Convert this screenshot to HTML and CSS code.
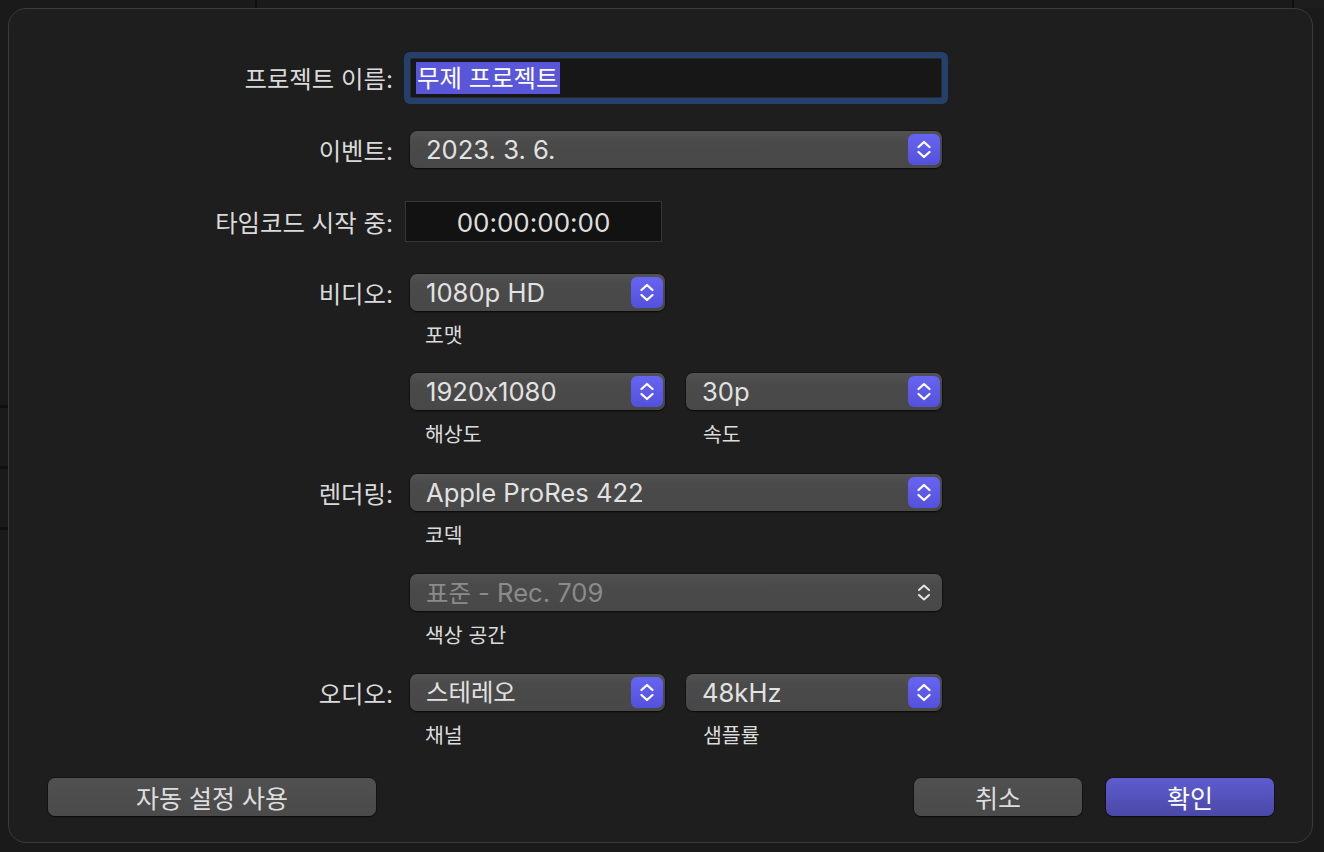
FILE: index.html
```html
<!DOCTYPE html>
<html lang="ko">
<head>
<meta charset="utf-8">
<title>새 프로젝트</title>
<link rel="stylesheet" href="styles.css">
</head>
<body>
<div class="screen">
  <div class="dialog">
    <div class="form">
      <div class="row r-name">
        <div class="label field-label">프로젝트 이름:</div>
        <div class="ctl">
          <div class="textfield"><span class="sel">무제 프로젝트</span></div>
        </div>
      </div>

      <div class="row r-event">
        <div class="label">이벤트:</div>
        <div class="ctl">
          <div class="popup"><span class="val">2023. 3. 6.</span>
            <span class="stepper"><svg viewBox="0 0 32 31" width="32" height="31"><polyline points="10.5,13 16,8 21.5,13"/><polyline points="10.5,18 16,23 21.5,18"/></svg></span>
          </div>
        </div>
      </div>

      <div class="row r-tc">
        <div class="label tc-label">타임코드 시작 중:</div>
        <div class="ctl">
          <div class="timecode">00:00:00:00</div>
        </div>
      </div>

      <div class="row r-video">
        <div class="label">비디오:</div>
        <div class="ctl pair">
          <div class="cell">
            <div class="popup"><span class="val">1080p HD</span>
              <span class="stepper"><svg viewBox="0 0 32 31" width="32" height="31"><polyline points="10.5,13 16,8 21.5,13"/><polyline points="10.5,18 16,23 21.5,18"/></svg></span>
            </div>
            <div class="sub">포맷</div>
          </div>
          <div class="cell"></div>
        </div>
      </div>

      <div class="row r-res">
        <div class="label"></div>
        <div class="ctl pair">
          <div class="cell">
            <div class="popup"><span class="val">1920x1080</span>
              <span class="stepper"><svg viewBox="0 0 32 31" width="32" height="31"><polyline points="10.5,13 16,8 21.5,13"/><polyline points="10.5,18 16,23 21.5,18"/></svg></span>
            </div>
            <div class="sub">해상도</div>
          </div>
          <div class="cell">
            <div class="popup"><span class="val">30p</span>
              <span class="stepper"><svg viewBox="0 0 32 31" width="32" height="31"><polyline points="10.5,13 16,8 21.5,13"/><polyline points="10.5,18 16,23 21.5,18"/></svg></span>
            </div>
            <div class="sub">속도</div>
          </div>
        </div>
      </div>

      <div class="row r-render">
        <div class="label">렌더링:</div>
        <div class="ctl">
          <div class="popup"><span class="val">Apple ProRes 422</span>
            <span class="stepper"><svg viewBox="0 0 32 31" width="32" height="31"><polyline points="10.5,13 16,8 21.5,13"/><polyline points="10.5,18 16,23 21.5,18"/></svg></span>
          </div>
          <div class="sub">코덱</div>
        </div>
      </div>

      <div class="row r-color">
        <div class="label"></div>
        <div class="ctl">
          <div class="popup disabled"><span class="val"><span class="ko">표준</span> - Rec. 709</span>
            <span class="stepper plain"><svg viewBox="0 0 32 31" width="32" height="31"><polyline points="11,13 16,8.5 21,13"/><polyline points="11,18 16,22.5 21,18"/></svg></span>
          </div>
          <div class="sub">색상 공간</div>
        </div>
      </div>

      <div class="row r-audio">
        <div class="label">오디오:</div>
        <div class="ctl pair">
          <div class="cell">
            <div class="popup"><span class="val ko">스테레오</span>
              <span class="stepper"><svg viewBox="0 0 32 31" width="32" height="31"><polyline points="10.5,13 16,8 21.5,13"/><polyline points="10.5,18 16,23 21.5,18"/></svg></span>
            </div>
            <div class="sub">채널</div>
          </div>
          <div class="cell">
            <div class="popup"><span class="val">48kHz</span>
              <span class="stepper"><svg viewBox="0 0 32 31" width="32" height="31"><polyline points="10.5,13 16,8 21.5,13"/><polyline points="10.5,18 16,23 21.5,18"/></svg></span>
            </div>
            <div class="sub">샘플률</div>
          </div>
        </div>
      </div>
    </div>

    <div class="buttons">
      <button class="btn btn-auto">자동 설정 사용</button>
      <div class="spacer"></div>
      <button class="btn btn-cancel">취소</button>
      <button class="btn btn-ok">확인</button>
    </div>
  </div>
</div>
</body>
</html>
```

FILE: styles.css
```css
html, body {
  margin: 0;
  padding: 0;
}

body {
  background: #1a1a1a;
  font-family: "Inter", "Noto Sans CJK KR", sans-serif;
  font-feature-settings: "calt" 0;
  color: #dadada;
}

.screen {
  width: 1324px;
  height: 852px;
  box-sizing: border-box;
  padding: 8px 11px 9px 8px;
  background-color: #1a1a1a;
  background-image:
    linear-gradient(to right, transparent 255px, #0e0e0e 255px, #0e0e0e 257px, transparent 257px),
    linear-gradient(to right, transparent 1292px, #0e0e0e 1292px, #0e0e0e 1294px, #1d1d1d 1294px),
    linear-gradient(to bottom, transparent 405px, #0f0f0f 405px, #0f0f0f 408px, transparent 408px),
    linear-gradient(to bottom, transparent 466px, #0f0f0f 466px, #0f0f0f 469px, transparent 469px),
    linear-gradient(to bottom, transparent 527px, #0f0f0f 527px, #0f0f0f 530px, transparent 530px);
  background-size: 100% 8px, 100% 8px, 8px 100%, 8px 100%, 8px 100%;
  background-repeat: no-repeat;
  background-position: 0 0, 0 0, 0 0, 0 0, 0 0;
}

.dialog {
  width: 1305px;
  height: 835px;
  box-sizing: border-box;
  border: 1px solid #3b3b3b;
  border-radius: 18px;
  background: #1e1e1e;
  padding: 49px 38px 0 39px;
  display: flex;
  flex-direction: column;
}

.form {
  display: flex;
  flex-direction: column;
}

.row {
  display: flex;
  align-items: flex-start;
}

.label {
  width: 345px;
  margin-right: 17px;
  height: 37px;
  display: flex;
  align-items: center;
  justify-content: flex-end;
  font-size: 24.4px;
  color: #dadada;
  white-space: nowrap;
}

.field-label {
  height: 40px;
  padding-bottom: 2px;
  box-sizing: border-box;
}

.tc-label {
  height: 41px;
}

.ctl {
  width: 532px;
}

.pair {
  display: flex;
  gap: 21px;
}

.pair .cell {
  width: 255px;
}

.pair .cell + .cell {
  width: 256px;
}

/* row vertical rhythm */
.r-event { margin-top: 33px; }
.r-tc { margin-top: 33px; }
.r-video { margin-top: 32px; }
.r-res { margin-top: 25px; }
.r-render { margin-top: 27px; }
.r-color { margin-top: 26px; }
.r-audio { margin-top: 26px; }

/* text field */
.textfield {
  height: 40px;
  box-sizing: border-box;
  background: #171717;
  border: 1px solid #2a2a2a;
  box-shadow: 0 0 0 6px #25406b;
  border-radius: 2px;
  display: flex;
  align-items: center;
  padding-left: 5px;
}

.sel {
  background: #5a56d9;
  color: #ffffff;
  font-size: 24.4px;
  line-height: 32px;
  height: 32px;
  padding: 0 1px;
  white-space: nowrap;
}

/* popup buttons */
.popup {
  position: relative;
  height: 37px;
  box-sizing: border-box;
  border-radius: 7px;
  background: linear-gradient(#525252, #4a4a4a 30%, #484848);
  box-shadow: 0 1px 1.5px rgba(0, 0, 0, 0.55), 0 0 0 0.5px rgba(0, 0, 0, 0.5);
  display: flex;
  align-items: center;
  padding-left: 16px;
}

.val {
  font-size: 25.6px;
  color: #e2e2e2;
  white-space: nowrap;
  flex: 1;
  line-height: 37px;
}

.val.ko,
.ko {
  font-size: 24.4px;
}

.stepper {
  width: 32px;
  height: 31px;
  margin-right: 2px;
  border-radius: 6px;
  background: linear-gradient(#6664f2, #5351dc);
  display: flex;
  align-items: center;
  justify-content: center;
}

.stepper svg {
  display: block;
  fill: none;
  stroke: #ffffff;
  stroke-width: 2.3;
  stroke-linecap: round;
  stroke-linejoin: round;
}

.popup.disabled .val {
  color: #8b8b8b;
}

.stepper.plain {
  background: none;
}

.stepper.plain svg {
  stroke: #e4e4e4;
  stroke-width: 2;
}

/* sub labels */
.sub {
  margin-top: 13px;
  height: 24px;
  line-height: 24px;
  padding-left: 15px;
  font-size: 20.5px;
  color: #dcdcdc;
}

.pair .cell + .cell .sub {
  padding-left: 17px;
}

/* timecode */
.timecode {
  margin-left: -5px;
  width: 257px;
  height: 41px;
  box-sizing: border-box;
  background: #121212;
  border: 1px solid #363636;
  display: flex;
  align-items: center;
  justify-content: center;
  font-size: 26px;
  color: #dedede;
  padding-top: 1px;
}

/* buttons */
.buttons {
  margin-top: 30px;
  display: flex;
  gap: 24px;
}

.spacer {
  flex: 1;
}

.btn {
  height: 38px;
  border: none;
  border-radius: 7px;
  font-family: "Inter", "Noto Sans CJK KR", sans-serif;
  font-size: 25px;
  color: #dedede;
  background: linear-gradient(#505050, #4a4a4a);
  box-shadow: 0 1px 1.5px rgba(0, 0, 0, 0.55), 0 0 0 0.5px rgba(0, 0, 0, 0.5);
  padding: 0;
  margin: 0;
}

.btn-auto {
  width: 328px;
}

.btn-cancel,
.btn-ok {
  width: 168px;
}

.btn-ok {
  color: #ffffff;
  background: linear-gradient(#5e5cd0, #4a48a6);
}
```
